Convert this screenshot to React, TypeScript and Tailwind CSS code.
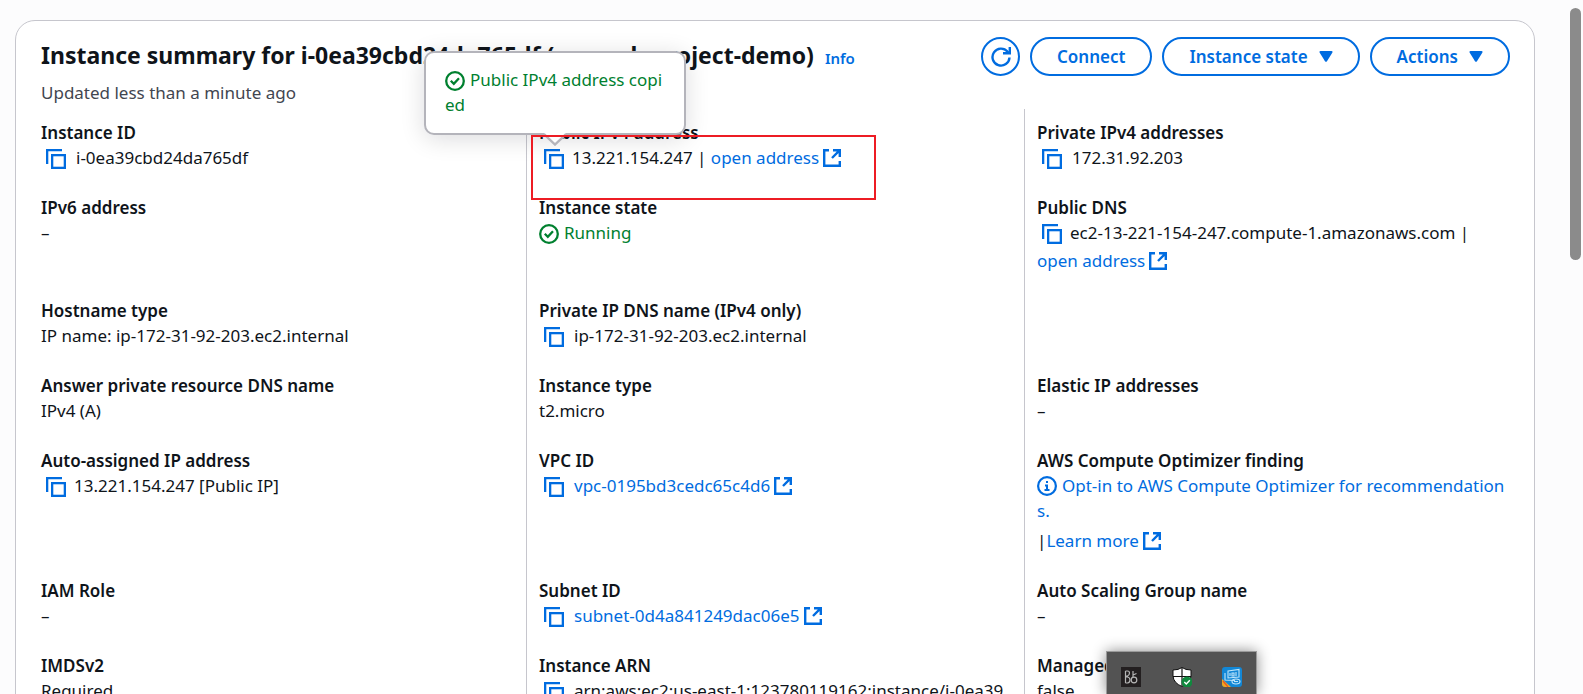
import type { ReactNode } from "react";

function CopyIcon() {
  return (
    <svg viewBox="0 0 20 20" className="size-5" fill="none" stroke="currentColor" strokeWidth="2.3" aria-hidden="true">
      <path d="M1.150 15V1.150H16" />
      <rect x="6.150" y="6.150" width="12.700" height="12.700" />
    </svg>
  );
}

function ExternalIcon() {
  return (
    <svg viewBox="0 0 18 18" className="mt-1 size-[18px] shrink-0" fill="none" stroke="currentColor" strokeWidth="2.4" aria-hidden="true">
      <path d="M6 1.200H1.200V16.800H16.800V12" />
      <path d="M10 1.200H16.800V8M16.800 1.200L9 9" />
    </svg>
  );
}

function CheckIcon() {
  return (
    <svg viewBox="0 0 20 20" className="size-5" fill="none" stroke="currentColor" strokeWidth="2.3" aria-hidden="true">
      <circle cx="10" cy="10" r="8.800" />
      <path d="M5.800 9.800L8.800 12.800L14 7.200" />
    </svg>
  );
}

function InfoIcon() {
  return (
    <svg viewBox="0 0 20 20" className="size-5" fill="none" stroke="currentColor" strokeWidth="2.2" aria-hidden="true">
      <circle cx="10" cy="10" r="8.900" />
      <path d="M10 5V7M8 9.500H10V14M7.500 14H12.500" strokeWidth="2" />
    </svg>
  );
}

function Caret() {
  return (
    <svg viewBox="0 0 14 11" className="h-[11px] w-[14px]" fill="currentColor" aria-hidden="true">
      <path d="M1.5 0H12.5Q14 .3 13.4 1.6L8 10.2Q7 11.4 6 10.2L.6 1.6Q0 .3 1.5 0Z" />
    </svg>
  );
}

function ExtLink({ children }: { children: ReactNode }) {
  return (
    <a href="#" className="inline-flex items-start gap-1 text-[#006ce0]">
      {children}
      <ExternalIcon />
    </a>
  );
}

function Copy({ label, tight, children }: { label: string; tight?: boolean; children: ReactNode }) {
  return (
    <div className={`flex items-start whitespace-nowrap pl-[5px] ${tight ? "gap-2" : "gap-[10px]"}`}>
      <button type="button" aria-label={`Copy ${label}`} className="mt-1 shrink-0 text-[#006ce0]">
        <CopyIcon />
      </button>
      <span className="flex items-start">{children}</span>
    </div>
  );
}

function Field({ label, children, overlay }: { label: string; children: ReactNode; overlay?: ReactNode }) {
  return (
    <div className="relative border-l border-[#c6c6cd] px-3 pt-[11px] pb-[14px] [&:nth-child(3n+1)]:border-transparent">
      <dt className="h-[25px] font-semibold">{label}</dt>
      <dd className="min-h-[25px]">{children}</dd>
      {overlay}
    </div>
  );
}

function CopiedTooltip() {
  return (
    <>
      <div
        role="status"
        className="absolute -top-[58px] -left-[103px] z-10 h-[84px] w-[262px] rounded-[10px] border-2 border-[#b4b4bb] bg-white px-[19px] py-[14px] break-all text-[#00802f] shadow-[0_4px_25px_rgba(0,7,22,0.14)]"
      >
        <span className="float-left mt-1 mr-[5px] h-5"><CheckIcon /></span>
        Public IPv4 address copied
        <svg viewBox="0 0 22 13" className="absolute -bottom-[13px] left-[118px] h-[13px] w-[22px]" aria-hidden="true">
          <path d="M0 0H22L11 11Z" fill="#fff" />
          <path d="M0 1L11 11.5L22 1" fill="none" stroke="#b4b4bb" strokeWidth="2.4" />
        </svg>
      </div>
      <div className="pointer-events-none absolute top-[26px] left-1 z-20 h-[65px] w-[345px] border-2 border-[#ed1c24]" />
    </>
  );
}

function PillButton({ children, menu }: { children: ReactNode; menu?: boolean }) {
  return (
    <button
      type="button"
      aria-haspopup={menu ? "menu" : undefined}
      className="flex h-[39px] items-center gap-[11px] rounded-full border-2 border-[#006ce0] bg-white px-[25px] font-semibold text-[#006ce0]"
    >
      {children}
      {menu && <Caret />}
    </button>
  );
}

function Tray() {
  return (
    <div className="fixed bottom-0 left-[1106px] z-30 flex h-[43px] w-[151px] justify-between border border-b-0 border-[#9a9a9a] bg-[#535353] px-[14px] pt-[15px] shadow-[0_0_14px_rgba(0,0,0,0.45)]">
      <svg viewBox="0 0 20 20" className="size-5" aria-hidden="true">
        <rect width="20" height="20" fill="#231f20" />
        <g fill="none" stroke="#b5b5b5" strokeWidth="1.2">
          <path d="M4.5 4V16M4.5 4H6.5Q8.5 4 8.5 6T6.5 9H4.5M4.5 10H6.5Q9 10.5 9 13T6.5 16H4.5" />
          <circle cx="13" cy="13" r="2.8" />
          <path d="M12 4V10M12 8L15.5 6.5" />
        </g>
      </svg>
      <svg viewBox="0 0 20 20" className="size-5" aria-hidden="true">
        <path d="M10 .5Q13.5 3 19 3V9Q18.500 16 10 19.500Q1.500 16 1 9V3Q6.500 3 10 .5Z" fill="#fff" stroke="#111" />
        <path d="M10 .5V19M1 9.500H19" stroke="#111" strokeWidth="1.2" />
        <circle cx="15" cy="15" r="5.5" fill="#10893e" />
        <path d="M12.300 15L14.300 17L17.800 13.300" fill="none" stroke="#fff" strokeWidth="1.4" />
      </svg>
      <svg viewBox="0 0 20 20" className="size-5" aria-hidden="true">
        <rect width="20" height="20" rx="3" fill="#1287d6" />
        <path d="M0 12L9 20H3Q0 20 0 17Z" fill="#f2a71b" />
        <path d="M1 14L6 20" stroke="#e5532d" strokeWidth="1.2" />
        <g fill="none" stroke="#bfe6fb" strokeWidth="1.1">
          <path d="M6 4L17 2.500V10L6 11ZM3 6V13L13 13.500M8 6V9M10 6H12V9H10ZM14 5V9" />
          <ellipse cx="14" cy="14.500" rx="4" ry="2.500" />
          <path d="M12 14.500H16" />
        </g>
      </svg>
    </div>
  );
}

export default function App() {
  return (
    <main className="h-screen overflow-hidden bg-[#fcfcfd] pt-5 pr-12 pl-[15px] font-['Noto_Sans','Open_Sans',sans-serif] text-[17px] leading-[25px] text-[#0f141a]">
      <section className="rounded-[20px] border border-[#c6c6cd] bg-white px-3 pt-4 pb-5">
        <header className="flex items-start justify-between pr-3 pl-[13px]">
          <div className="pt-[3px]">
            <div className="flex items-baseline gap-[11px]">
              <h2 className="text-[23px] leading-[30px] font-bold whitespace-nowrap">
                Instance summary for i-0ea39cbd24da765df (my-web-project-demo)
              </h2>
              <a href="#" className="text-[15px] leading-5 font-semibold text-[#006ce0]">Info</a>
            </div>
            <p className="mt-[10px] text-[#424650]">Updated less than a minute ago</p>
          </div>
          <div className="flex gap-[10px]">
            <button
              type="button"
              aria-label="Refresh"
              className="flex size-[39px] items-center justify-center rounded-full border-2 border-[#006ce0] bg-white text-[#006ce0]"
            >
              <svg viewBox="0 0 20 20" className="size-5" fill="none" stroke="currentColor" strokeWidth="2.4" aria-hidden="true">
                <path d="M18.500 10.500A8.500 8.500 0 1 1 16.500 4.600L18 6.200" />
                <path d="M18.800 0V6.300H12" />
              </svg>
            </button>
            <PillButton>Connect</PillButton>
            <PillButton menu>Instance state</PillButton>
            <PillButton menu>Actions</PillButton>
          </div>
        </header>

        <dl className="mt-1 grid grid-cols-3">
          <Field label="Instance ID"><Copy label="instance ID">i-0ea39cbd24da765df</Copy></Field>
          <Field label="Public IPv4 address" overlay={<CopiedTooltip />}>
            <Copy label="public IPv4 address" tight>
              <span className="whitespace-pre">13.221.154.247 | </span>
              <ExtLink>open address</ExtLink>
            </Copy>
          </Field>
          <Field label="Private IPv4 addresses"><Copy label="private IPv4 address">172.31.92.203</Copy></Field>

          <Field label="IPv6 address">–</Field>
          <Field label="Instance state">
            <span className="flex items-start gap-[5px] text-[#00802f]">
              <span className="mt-1"><CheckIcon /></span>Running
            </span>
          </Field>
          <Field label="Public DNS">
            <Copy label="public DNS" tight>ec2-13-221-154-247.compute-1.amazonaws.com |</Copy>
            <div className="mt-[3px] flex"><ExtLink>open address</ExtLink></div>
          </Field>

          <Field label="Hostname type">IP name: ip-172-31-92-203.ec2.internal</Field>
          <Field label="Private IP DNS name (IPv4 only)">
            <Copy label="private IP DNS name">ip-172-31-92-203.ec2.internal</Copy>
          </Field>
          <Field label=""> </Field>

          <Field label="Answer private resource DNS name">IPv4 (A)</Field>
          <Field label="Instance type">t2.micro</Field>
          <Field label="Elastic IP addresses">–</Field>

          <Field label="Auto-assigned IP address">
            <Copy label="auto-assigned IP address" tight>13.221.154.247 [Public IP]</Copy>
          </Field>
          <Field label="VPC ID"><Copy label="VPC ID"><ExtLink>vpc-0195bd3cedc65c4d6</ExtLink></Copy></Field>
          <Field label="AWS Compute Optimizer finding">
            <a href="#" className="block break-all text-[#006ce0]">
              <span className="float-left mt-[3px] mr-[5px] h-5"><InfoIcon /></span>
              Opt-in to AWS Compute Optimizer for recommendations.
            </a>
            <div className="mt-[5px] flex">|<ExtLink>Learn more</ExtLink></div>
          </Field>

          <Field label="IAM Role">–</Field>
          <Field label="Subnet ID"><Copy label="subnet ID"><ExtLink>subnet-0d4a841249dac06e5</ExtLink></Copy></Field>
          <Field label="Auto Scaling Group name">–</Field>

          <Field label="IMDSv2">Required</Field>
          <Field label="Instance ARN"><Copy label="instance ARN">arn:aws:ec2:us-east-1:123780119162:instance/i-0ea39</Copy></Field>
          <Field label="Managed">false</Field>
        </dl>
      </section>

      <div className="fixed top-2 right-[2px] h-[252px] w-[11px] rounded-full bg-[#8b8b8b]" aria-hidden="true" />
      <Tray />
    </main>
  );
}
